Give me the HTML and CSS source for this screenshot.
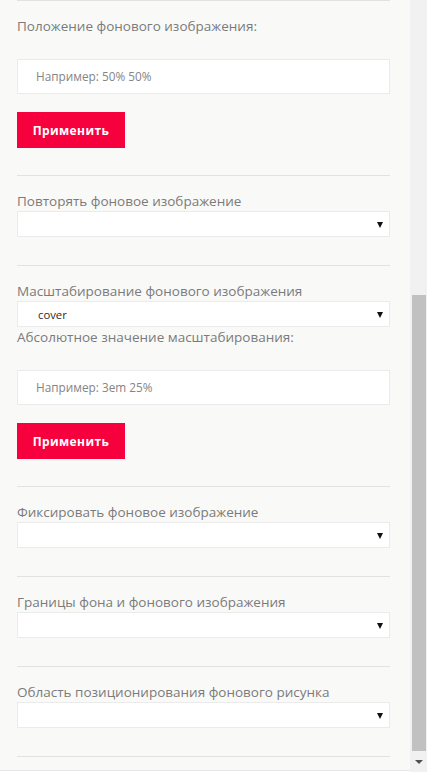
FILE: index.html
```html
<!DOCTYPE html>
<html lang="ru">
<head>
<meta charset="utf-8">
<title>Фоновое изображение</title>
<link rel="stylesheet" href="styles.css">
</head>
<body>
<div class="app">
  <div class="panel">
    <div class="content">
      <section class="group">
        <div class="label">Положение фонового изображения:</div>
        <div class="input">Например: 50% 50%</div>
        <button class="btn">Применить</button>
      </section>
      <section class="group group-select">
        <div class="label">Повторять фоновое изображение</div>
        <div class="select"><span class="value"></span><span class="arrow"></span></div>
      </section>
      <section class="group">
        <div class="label">Масштабирование фонового изображения</div>
        <div class="select"><span class="value">cover</span><span class="arrow"></span></div>
        <div class="label">Абсолютное значение масштабирования:</div>
        <div class="input">Например: 3em 25%</div>
        <button class="btn">Применить</button>
      </section>
      <section class="group group-select">
        <div class="label">Фиксировать фоновое изображение</div>
        <div class="select"><span class="value"></span><span class="arrow"></span></div>
      </section>
      <section class="group group-select">
        <div class="label">Границы фона и фонового изображения</div>
        <div class="select"><span class="value"></span><span class="arrow"></span></div>
      </section>
      <section class="group group-select">
        <div class="label">Область позиционирования фонового рисунка</div>
        <div class="select"><span class="value"></span><span class="arrow"></span></div>
      </section>
      <div class="end-line"></div>
    </div>
  </div>
  <div class="scrollbar">
    <div class="track"><div class="thumb"></div></div>
    <div class="scroll-btn"><span class="down"></span></div>
  </div>
  <div class="edge"></div>
</div>
</body>
</html>
```

FILE: styles.css
```css
html, body {
  margin: 0;
  padding: 0;
  height: 772px;
  overflow: hidden;
  background: #ffffff;
  font-family: "Open Sans", "Noto Sans", sans-serif;
}

.app {
  display: flex;
  height: 772px;
}

.panel {
  width: 410px;
  height: 770px;
  background: #f9f9f8;
  border-bottom: 1px solid #e6e6e6;
  overflow: hidden;
}

.content {
  padding: 0 20px 0 17px;
}

.group {
  border-top: 1px solid #e2e2e2;
  padding: 15px 0 27px;
  display: flex;
  flex-direction: column;
  align-items: flex-start;
}

.group-select {
  padding-bottom: 28px;
}

.label {
  font-size: 13.5px;
  line-height: 20px;
  color: #7b7b7b;
  height: 20px;
  white-space: nowrap;
}

.input {
  box-sizing: border-box;
  width: 100%;
  height: 35px;
  margin-top: 23px;
  background: #ffffff;
  border: 1px solid #ebebeb;
  padding: 0 18px;
  font-size: 11.8px;
  line-height: 33px;
  color: #858585;
}

.btn {
  margin-top: 18px;
  height: 36px;
  width: 108px;
  border: 0;
  padding: 0;
  background: #f6003e;
  color: #ffffff;
  font-family: "Open Sans", "Noto Sans", sans-serif;
  font-weight: 700;
  font-size: 12px;
  letter-spacing: 0.4px;
}

.select {
  box-sizing: border-box;
  width: 100%;
  height: 26px;
  background: #ffffff;
  border: 1px solid #ebebeb;
  display: flex;
  align-items: center;
  justify-content: space-between;
  padding: 0 6px 0 20px;
}

.value {
  font-size: 11.3px;
  color: #2b2b2b;
}

.arrow {
  width: 0;
  height: 0;
  border-left: 3px solid transparent;
  border-right: 3px solid transparent;
  border-top: 6px solid #111111;
  margin-top: 1px;
}

.end-line {
  border-top: 1px solid #e2e2e2;
}

.scrollbar {
  width: 17px;
  height: 772px;
  background: #f1f1f1;
  display: flex;
  flex-direction: column;
}

.track {
  flex: 1;
  padding: 295px 1px 0 2px;
}

.thumb {
  height: 456px;
  background: #c1c1c1;
}

.scroll-btn {
  height: 21px;
  display: flex;
  justify-content: center;
  align-items: center;
  padding-left: 1px;
}

.down {
  width: 0;
  height: 0;
  border-left: 4px solid transparent;
  border-right: 4px solid transparent;
  border-top: 4px solid #505050;
}

.edge {
  width: 3px;
  background: #ffffff;
}
```
